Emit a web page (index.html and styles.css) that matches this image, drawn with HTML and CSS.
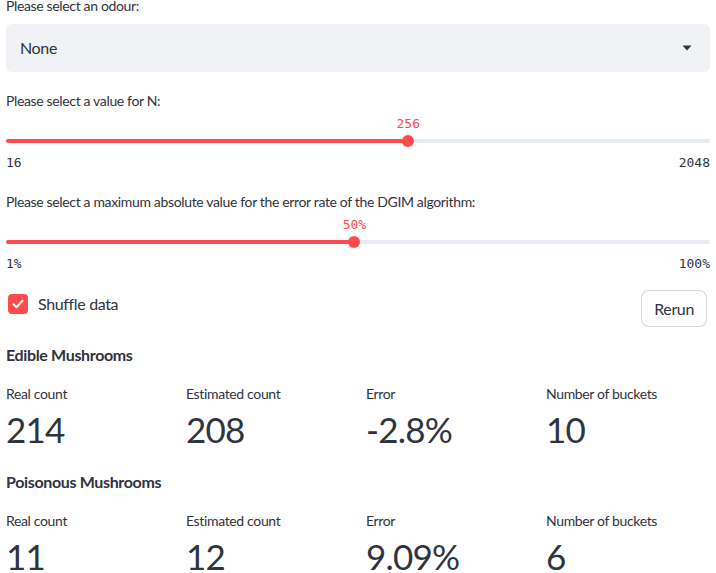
FILE: index.html
```html
<!DOCTYPE html>
<html>
<head>
<meta charset="utf-8">
<link rel="stylesheet" href="styles.css">
</head>
<body>
<div class="app">
  <div class="field-label first">Please select an odour:</div>
  <div class="select">
    <span>None</span>
    <svg class="caret" width="10" height="6" viewBox="0 0 10 6"><path d="M0.5 0.5h9L5 5.5z" fill="#31333f"/></svg>
  </div>

  <div class="field-label gap-a">Please select a value for N:</div>
  <div class="slider">
    <div class="slider-top"><span class="slider-value" style="left:57.14%">256</span></div>
    <div class="track-row">
      <div class="track"><div class="fill" style="width:57.14%"></div></div>
      <div class="thumb" style="left:57.14%"></div>
    </div>
    <div class="minmax"><span>16</span><span>2048</span></div>
  </div>

  <div class="field-label gap-b">Please select a maximum absolute value for the error rate of the DGIM algorithm:</div>
  <div class="slider">
    <div class="slider-top"><span class="slider-value" style="left:49.49%">50%</span></div>
    <div class="track-row">
      <div class="track"><div class="fill" style="width:49.49%"></div></div>
      <div class="thumb" style="left:49.49%"></div>
    </div>
    <div class="minmax"><span>1%</span><span>100%</span></div>
  </div>

  <div class="controls">
    <label class="check">
      <span class="box"><svg width="12" height="10" viewBox="0 0 12 10"><path d="M1.5 5.2l3 3 6-6.5" fill="none" stroke="#fff" stroke-width="2" stroke-linecap="round" stroke-linejoin="round"/></svg></span>
      <span class="check-text">Shuffle data</span>
    </label>
    <button class="btn">Rerun</button>
  </div>

  <h3 class="section">Edible Mushrooms</h3>
  <div class="metrics">
    <div class="metric"><div class="m-label">Real count</div><div class="m-value">214</div></div>
    <div class="metric"><div class="m-label">Estimated count</div><div class="m-value">208</div></div>
    <div class="metric"><div class="m-label">Error</div><div class="m-value">-2.8%</div></div>
    <div class="metric"><div class="m-label">Number of buckets</div><div class="m-value">10</div></div>
  </div>

  <h3 class="section second">Poisonous Mushrooms</h3>
  <div class="metrics">
    <div class="metric"><div class="m-label">Real count</div><div class="m-value">11</div></div>
    <div class="metric"><div class="m-label">Estimated count</div><div class="m-value">12</div></div>
    <div class="metric"><div class="m-label">Error</div><div class="m-value">9.09%</div></div>
    <div class="metric"><div class="m-label">Number of buckets</div><div class="m-value">6</div></div>
  </div>
</div>
</body>
</html>
```
FILE: styles.css
```css
html, body {
  margin: 0;
  padding: 0;
  background: #ffffff;
  overflow: hidden;
}
body {
  font-family: "Lato", "Noto Sans", sans-serif;
  letter-spacing: -0.35px;
  color: #31333f;
}
.app {
  display: flex;
  flex-direction: column;
  padding: 0 6px;
}
.field-label {
  font-size: 14px;
  line-height: 20px;
  height: 20px;
}
.first { margin-top: -4px; margin-bottom: 8px; }
.gap-a { margin-top: 19px; }
.gap-b { margin-top: 19px; }
.select {
  height: 48px;
  background: #f0f2f6;
  border-radius: 6px;
  display: flex;
  align-items: center;
  justify-content: space-between;
  padding: 0 18px 0 14px;
  font-size: 16px;
  line-height: 20px;
}
.select span { margin-top: -1px; }
.slider {
  display: flex;
  flex-direction: column;
}
.slider-top {
  position: relative;
  height: 20px;
  margin-top: 3px;
}
.slider-value {
  position: absolute;
  top: 0;
  transform: translateX(-50%);
  font-family: "DejaVu Sans Mono", "Liberation Mono", monospace;
  letter-spacing: 0;
  font-size: 13px;
  line-height: 20px;
  color: #ff4b4b;
}
.track-row {
  position: relative;
  height: 14px;
  display: flex;
  align-items: center;
}
.track {
  flex: 1;
  height: 4px;
  border-radius: 2px;
  background: #e6eaf1;
  overflow: hidden;
}
.fill {
  height: 100%;
  background: #ff4b4b;
}
.thumb {
  position: absolute;
  top: 1px;
  width: 12px;
  height: 12px;
  margin-left: -6px;
  border-radius: 50%;
  background: #ff4b4b;
}
.minmax {
  display: flex;
  justify-content: space-between;
  margin-top: 5px;
  font-family: "DejaVu Sans Mono", "Liberation Mono", monospace;
  letter-spacing: 0;
  font-size: 13px;
  line-height: 20px;
  color: #31333f;
}
.controls {
  display: flex;
  justify-content: space-between;
  align-items: flex-start;
  margin-top: 17px;
  height: 36px;
}
.check {
  display: flex;
  align-items: center;
  gap: 10px;
  margin-top: 3px;
  margin-left: 2px;
  font-size: 16px;
}
.box {
  width: 20px;
  height: 20px;
  border-radius: 4px;
  background: #ff4b4b;
  display: flex;
  align-items: center;
  justify-content: center;
}
.check-text { line-height: 20px; }
.btn {
  height: 37px;
  padding: 0 12px;
  margin-top: -1px;
  margin-right: 3px;
  border: 1px solid rgba(49, 51, 63, 0.2);
  border-radius: 8px;
  background: #fff;
  font-family: inherit;
  letter-spacing: inherit;
  font-size: 16px;
  color: #31333f;
}
.section {
  margin: 18px 0 0;
  font-size: 16px;
  font-weight: 700;
  line-height: 20px;
}
.second { margin-top: 21px; }
.metrics {
  display: grid;
  grid-template-columns: repeat(4, 1fr);
  column-gap: 16px;
  margin-top: 19px;
}
.m-label {
  font-size: 14px;
  line-height: 20px;
}
.m-value {
  font-size: 35px;
  letter-spacing: -0.8px;
  line-height: 44px;
  margin-top: 3px;
}
```
